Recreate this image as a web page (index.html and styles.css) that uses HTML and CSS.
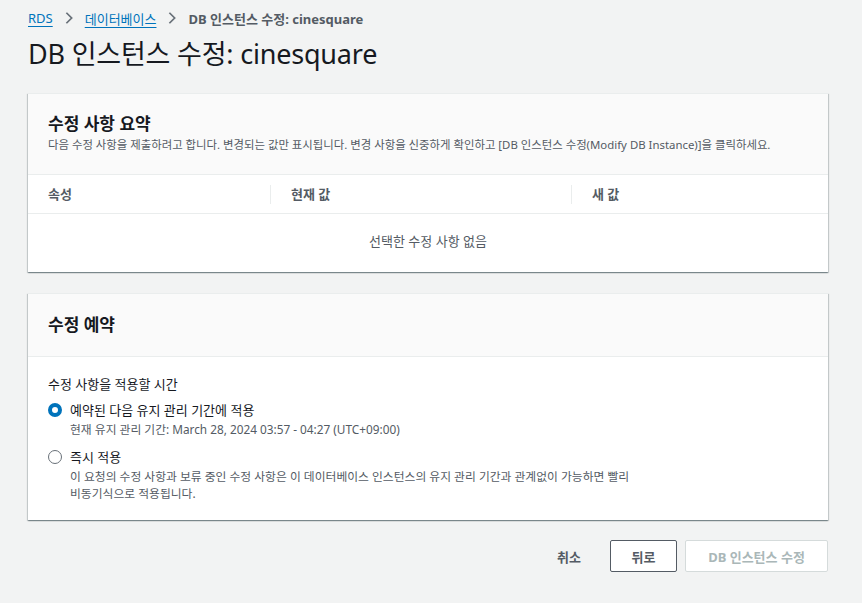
FILE: index.html
```html
<!DOCTYPE html>
<html lang="ko">
<head>
  <meta charset="UTF-8">
  <meta name="viewport" content="width=device-width, initial-scale=1.0">
  <title>DB 인스턴스 수정</title>
  <link rel="stylesheet" href="styles.css">
</head>
<body>
  <div class="page">
    <nav class="breadcrumbs">
      <a href="#">RDS</a>
      <svg class="chevron" viewBox="0 0 16 16" width="14" height="14"><path d="M5 2l6 6-6 6" fill="none" stroke="#687078" stroke-width="2"/></svg>
      <a href="#">데이터베이스</a>
      <svg class="chevron" viewBox="0 0 16 16" width="14" height="14"><path d="M5 2l6 6-6 6" fill="none" stroke="#687078" stroke-width="2"/></svg>
      <span class="current">DB 인스턴스 수정: cinesquare</span>
    </nav>

    <h1 class="page-title">DB 인스턴스 수정: cinesquare</h1>

    <!-- Summary card -->
    <section class="card">
      <div class="card-header summary-header">
        <h2>수정 사항 요약</h2>
        <p class="card-desc">다음 수정 사항을 제출하려고 합니다. 변경되는 값만 표시됩니다. 변경 사항을 신중하게 확인하고 [DB 인스턴스 수정(Modify DB Instance)]을 클릭하세요.</p>
      </div>
      <div class="table-head">
        <div class="th">속성</div>
        <div class="th">현재 값</div>
        <div class="th">새 값</div>
      </div>
      <div class="empty-row">선택한 수정 사항 없음</div>
    </section>

    <!-- Schedule card -->
    <section class="card">
      <div class="card-header schedule-header">
        <h2>수정 예약</h2>
      </div>
      <div class="card-body">
        <div class="field-label">수정 사항을 적용할 시간</div>
        <label class="radio">
          <span class="radio-dot checked"></span>
          <span class="radio-text">
            <span class="radio-title">예약된 다음 유지 관리 기간에 적용</span>
            <span class="radio-desc">현재 유지 관리 기간: March 28, 2024 03:57 - 04:27 (UTC+09:00)</span>
          </span>
        </label>
        <label class="radio">
          <span class="radio-dot"></span>
          <span class="radio-text">
            <span class="radio-title">즉시 적용</span>
            <span class="radio-desc narrow">이 요청의 수정 사항과 보류 중인 수정 사항은 이 데이터베이스 인스턴스의 유지 관리 기간과 관계없이 가능하면 빨리 비동기식으로 적용됩니다.</span>
          </span>
        </label>
      </div>
    </section>

    <div class="actions">
      <a href="#" class="link-btn">취소</a>
      <button class="btn">뒤로</button>
      <button class="btn disabled" disabled>DB 인스턴스 수정</button>
    </div>
  </div>
</body>
</html>
```

FILE: styles.css
```css
/* General */
* {
  box-sizing: border-box;
  margin: 0;
  padding: 0;
}

body {
  font-family: "Noto Sans", "Noto Sans CJK KR", sans-serif;
  background-color: #f2f3f3;
  color: #16191f;
  font-size: 14px;
}

.page {
  padding: 8px 34px 0 28px;
}

/* Breadcrumbs */
.breadcrumbs {
  display: flex;
  align-items: center;
  gap: 9px;
  height: 20px;
  font-size: 13px;
}

.breadcrumbs a {
  color: #0073bb;
  text-decoration: underline;
  text-underline-offset: 3px;
}

.breadcrumbs .current {
  color: #545b64;
  font-weight: bold;
}

.page-title {
  font-size: 27px;
  font-weight: normal;
  line-height: 34px;
  margin-top: 9px;
  margin-bottom: 22px;
  letter-spacing: -0.2px;
}

/* Cards */
.card {
  background: #fff;
  box-shadow: 0 1px 1px 0 rgba(0, 28, 36, 0.3), 1px 1px 1px 0 rgba(0, 28, 36, 0.15), -1px 1px 1px 0 rgba(0, 28, 36, 0.15);
  border-top: 1px solid #eaeded;
  margin-bottom: 21px;
}

.card-header {
  background: #fafafa;
  border-bottom: 1px solid #eaeded;
  padding: 0 20px;
}

.card-header h2 {
  font-size: 17px;
  font-weight: bold;
  line-height: 24px;
}

.summary-header {
  padding-top: 18px;
  height: 81px;
}

.schedule-header {
  height: 63px;
  padding-top: 19px;
}

.card-desc {
  font-size: 11.4px;
  color: #545b64;
  line-height: 16px;
  margin-top: 1px;
  white-space: nowrap;
}

/* Table */
.table-head {
  display: grid;
  grid-template-columns: 242px 301px 1fr;
  height: 39px;
  align-items: center;
  border-bottom: 1px solid #eaeded;
}

.th {
  font-weight: bold;
  font-size: 13px;
  color: #545b64;
  padding-left: 20px;
  border-left: 1px solid #eaeded;
  line-height: 19px;
}

.th:first-child {
  border-left: none;
}

.empty-row {
  text-align: center;
  height: 58px;
  line-height: 54px;
  font-size: 13px;
  color: #545b64;
}

/* Radios */
.card-body {
  padding: 17px 20px 18px;
}

.field-label {
  font-size: 13px;
  line-height: 20px;
  margin-bottom: 6px;
}

.radio {
  display: flex;
  gap: 8px;
  margin-bottom: 9px;
}

.radio:last-child {
  margin-bottom: 0;
}

.radio-dot {
  width: 14px;
  height: 14px;
  border: 1px solid #687078;
  border-radius: 50%;
  margin-top: 3px;
  flex-shrink: 0;
  background: #fff;
}

.radio-dot.checked {
  border: 4px solid #0073bb;
}

.radio-text {
  display: flex;
  flex-direction: column;
}

.radio-title {
  font-size: 13px;
  line-height: 20px;
}

.radio-desc {
  font-size: 11.8px;
  color: #545b64;
  line-height: 17px;
  margin-top: 1px;
}

.radio-desc.narrow {
  max-width: 565px;
  word-break: keep-all;
}

/* Actions */
.actions {
  display: flex;
  justify-content: flex-end;
  align-items: center;
  gap: 8px;
  margin-top: -1px;
}

.link-btn {
  font-weight: bold;
  font-size: 13px;
  color: #545b64;
  text-decoration: none;
  padding: 0 21px 0 20px;
}

.btn {
  font-family: inherit;
  font-weight: bold;
  font-size: 13px;
  background: #fff;
  color: #545b64;
  border: 1px solid #545b64;
  border-radius: 2px;
  height: 32px;
  padding: 0 20px;
}

.btn:first-of-type {
  width: 67px;
}

.btn.disabled {
  border-color: #d5dbdb;
  color: #aab7b8;
  width: 143px;
}
```
